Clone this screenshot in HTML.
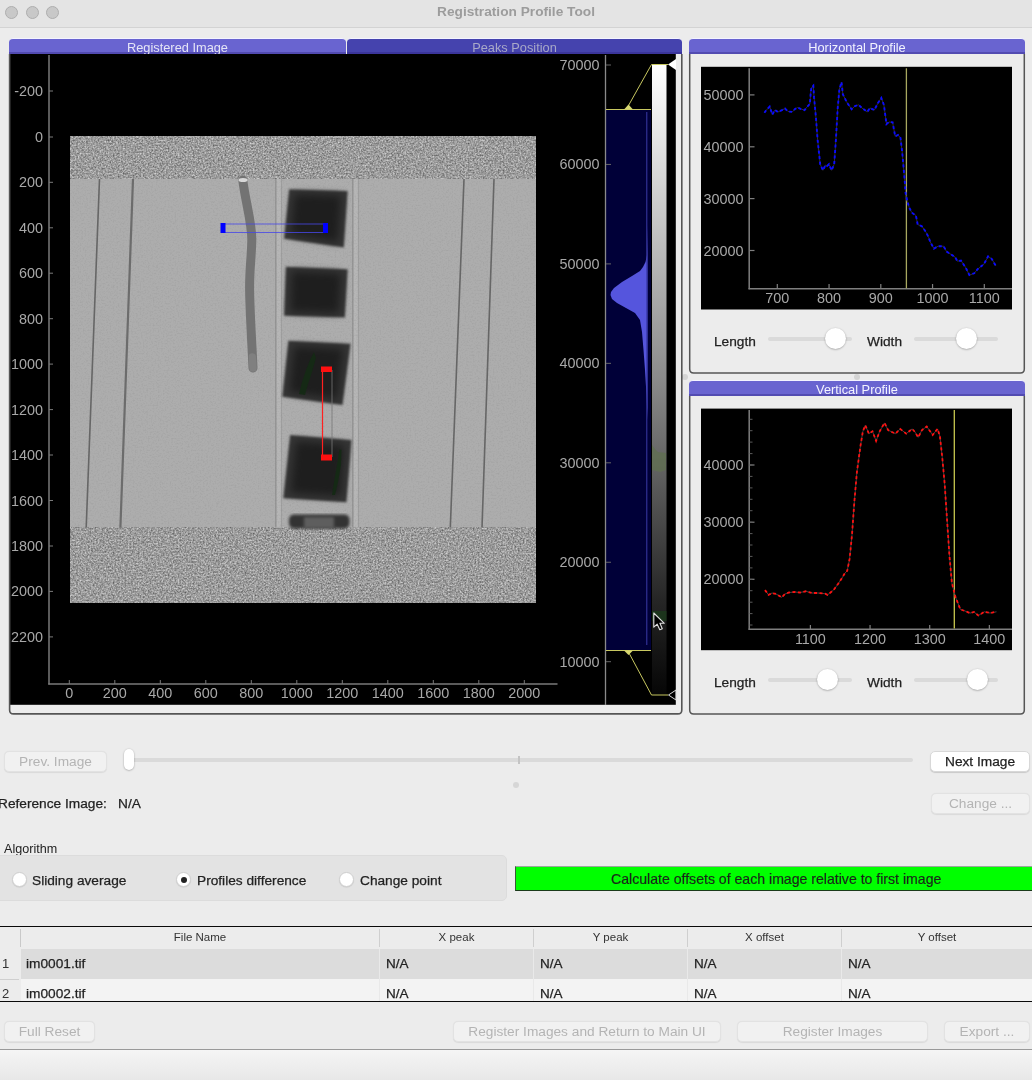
<!DOCTYPE html>
<html><head><meta charset="utf-8">
<style>
*{box-sizing:border-box}
html,body{margin:0;padding:0}
body{width:1032px;height:1080px;background:#ececec;position:relative;overflow:hidden;font-family:"Liberation Sans",sans-serif;color:#222;-webkit-font-smoothing:antialiased}
.a{will-change:transform}
.a{position:absolute}
.titlebar{left:0;top:0;width:1032px;height:28px;background:#e4e4e4;border-bottom:1px solid #d3d3d3}
.tl{width:13px;height:13px;border-radius:50%;background:#c8c8c8;border:1px solid #adadad;top:6px}
.title{left:0;width:1032px;top:4px;text-align:center;font-weight:bold;font-size:13.7px;color:#9c9c9c;line-height:16px}
.tab{height:16px;border-radius:4px 4px 0 0;font-size:12.8px;line-height:17px;text-align:center;border-top:1px solid #f4f4ff;overflow:hidden;box-shadow:inset 0 -2px 0 rgba(40,30,120,0.35)}
.btn{height:21px;border-radius:5px;background:#f1f1f1;border:1px solid #e2e2e2;font-size:13.7px;line-height:19px;text-align:center;color:#b4b4b4;box-shadow:0 0.5px 1px rgba(0,0,0,0.08)}
.btnw{background:#fff;color:#222;border:1px solid #d8d8d8;box-shadow:0 1px 1px rgba(0,0,0,0.15);-webkit-text-stroke:0.25px #222}
.lbl{font-size:13.7px;line-height:16px;color:#222;white-space:nowrap;-webkit-text-stroke:0.25px #222}
.radio{width:15px;height:15px;border-radius:50%;background:#fff;border:1px solid #cfcfcf;box-shadow:0 0.5px 1px rgba(0,0,0,0.12)}
.track{height:4px;border-radius:2px;background:#dadada}
.knob{width:21px;height:21px;border-radius:50%;background:#fff;box-shadow:0 0.5px 2px rgba(0,0,0,0.35)}
</style></head><body>

<!-- title bar -->
<div class="a titlebar"></div>
<div class="a tl" style="left:5px"></div>
<div class="a tl" style="left:25.5px"></div>
<div class="a tl" style="left:46px"></div>
<div class="a title">Registration Profile Tool</div>

<!-- LEFT PANEL -->
<div class="a tab" style="left:9px;top:38px;width:337px;background:#6964d0;color:#e4e4f6">Registered Image</div>
<div class="a tab" style="left:347px;top:38px;width:335px;background:#4543ae;color:#a8a8c8">Peaks Position</div>

<svg class="a" style="left:0;top:0" width="690" height="720" viewBox="0 0 690 720" id="leftsvg">
<defs>
<filter id="noise" x="0" y="0" width="100%" height="100%" filterUnits="objectBoundingBox" color-interpolation-filters="sRGB">
 <feTurbulence type="fractalNoise" baseFrequency="0.6" numOctaves="3" seed="5" result="t"/>
 <feColorMatrix in="t" type="matrix" values="0.6 0 0 0 0.31  0.6 0 0 0 0.31  0.6 0 0 0 0.31  0 0 0 0 1"/>
</filter>
<filter id="fine" x="-2%" y="-2%" width="104%" height="104%">
 <feTurbulence type="fractalNoise" baseFrequency="0.9" numOctaves="1" seed="7" result="t"/>
 <feColorMatrix in="t" type="matrix" values="0 0 0 0 0  0 0 0 0 0  0 0 0 0 0  0.25 0 0 0 -0.07" result="n"/>
 <feComposite in="n" in2="SourceGraphic" operator="in" result="nn"/>
 <feBlend in="SourceGraphic" in2="nn" mode="normal"/>
</filter>
<filter id="midnoise" x="0" y="0" width="100%" height="100%" color-interpolation-filters="sRGB">
 <feTurbulence type="fractalNoise" baseFrequency="0.6" numOctaves="2" seed="11" result="t"/>
 <feColorMatrix in="t" type="matrix" values="0 0 0 0 0.5  0 0 0 0 0.5  0 0 0 0 0.5  0.5 0 0 0 -0.22"/>
</filter>
<filter id="blur1" x="-10%" y="-10%" width="120%" height="120%" color-interpolation-filters="sRGB"><feGaussianBlur stdDeviation="1.6"/></filter>
<filter id="blur2" x="-20%" y="-20%" width="140%" height="140%" color-interpolation-filters="sRGB"><feGaussianBlur stdDeviation="1.3"/></filter>
<filter id="blur3" x="-20%" y="-20%" width="140%" height="140%" color-interpolation-filters="sRGB"><feGaussianBlur stdDeviation="4"/></filter>
<filter id="blur05" x="-100%" y="-10%" width="300%" height="120%" color-interpolation-filters="sRGB"><feGaussianBlur stdDeviation="0.6"/></filter>
<linearGradient id="lut" x1="0" y1="0" x2="0" y2="1">
 <stop offset="0" stop-color="#ffffff"/>
 <stop offset="0.06" stop-color="#f2f2f2"/>
 <stop offset="0.5" stop-color="#8a8a8a"/>
 <stop offset="0.85" stop-color="#262626"/>
 <stop offset="1" stop-color="#060606"/>
</linearGradient>
</defs>
<rect x="9.3" y="54" width="666.5" height="650.8" fill="#000"/>
<rect x="70" y="136.5" width="466" height="466.0" fill="#adadad"/>
<rect x="70" y="136.5" width="466" height="42.5" fill="#999" filter="url(#noise)"/>
<rect x="70" y="527.5" width="466" height="75.0" fill="#999" filter="url(#noise)"/>
<rect x="275" y="179" width="7" height="348.5" fill="#b6b6b6"/>
<line x1="275.8" y1="179" x2="275.8" y2="527.5" stroke="#939393" stroke-width="1.5"/>
<line x1="281.5" y1="179" x2="281.5" y2="527.5" stroke="#9e9e9e" stroke-width="1.2"/>
<rect x="352" y="179" width="7" height="348.5" fill="#b6b6b6"/>
<line x1="352.8" y1="179" x2="352.8" y2="527.5" stroke="#939393" stroke-width="1.5"/>
<line x1="358.5" y1="179" x2="358.5" y2="527.5" stroke="#9e9e9e" stroke-width="1.2"/>
<rect x="70" y="179" width="466" height="348.5" fill="#fff" filter="url(#midnoise)" opacity="1"/>
<line x1="99.5" y1="179" x2="86.2" y2="527.5" stroke="#666" stroke-width="1.6"/>
<line x1="133" y1="179" x2="120.4" y2="527.5" stroke="#6c6c6c" stroke-width="2.2"/>
<line x1="464" y1="179" x2="450.3" y2="527.5" stroke="#666" stroke-width="1.6"/>
<line x1="494" y1="179" x2="482" y2="527.5" stroke="#666" stroke-width="1.6"/>
<path d="M242.8 180 C245 200 252 222 251.8 240 C251.5 258 249.3 270 249.6 290 C250 315 252 345 253 368" stroke="#737373" stroke-width="9" fill="none" stroke-linecap="round" filter="url(#blur05)"/>
<path d="M252.4 357 L253 368" stroke="#808080" stroke-width="7.5" fill="none" stroke-linecap="round"/>
<ellipse cx="243" cy="180" rx="4.5" ry="2" fill="#d8d8d8" filter="url(#blur05)"/>
<polygon points="289.21475,189.202 347.61575,190.95299999999997 343.80475,247.60299999999998 284.06475,238.642" fill="#363636" filter="url(#blur2)"/>
<polygon points="294.7115,193.99 341.2055,195.435 338.1715,242.185 290.6115,234.79" fill="#1e1e1e" filter="url(#blur3)"/>
<polygon points="285.83299999999997,266.756 347.633,269.331 344.852,317.432 284.082,315.681" fill="#363636" filter="url(#blur2)"/>
<polygon points="291.902,271.22 341.102,273.345 338.888,313.03999999999996 290.508,311.595" fill="#1e1e1e" filter="url(#blur3)"/>
<polygon points="288.39824999999996,340.80375 350.50725,343.79075 342.47325,404.97275 282.32125,396.73275" fill="#363636" filter="url(#blur2)"/>
<polygon points="294.0105,346.18125 343.4565,348.64625 337.0605,399.13625 289.1725,392.33625" fill="#1e1e1e" filter="url(#blur3)"/>
<polygon points="290.1945,435.0145 351.47950000000003,440.06149999999997 346.4325,502.1705 283.2935,498.1535" fill="#363636" filter="url(#blur2)"/>
<polygon points="295.833,440.9275 344.623,445.0925 340.605,496.34749999999997 290.339,493.0325" fill="#1e1e1e" filter="url(#blur3)"/>
<rect x="289" y="514.5" width="60.5" height="14" rx="5" fill="#333" filter="url(#blur1)"/>
<rect x="304" y="517" width="30" height="11" fill="#5e5e5e" filter="url(#blur1)"/>
<path d="M314 352 L310 360 L306 370 L302 382 L299 394 L305 395 L308 384 L312 372 L316 358 Z" fill="#142a14" opacity="0.9"/>
<path d="M339.5 449 L337 465 L334 482 L332 495 L335 495 L338 482 L341 465 L341.5 450 Z" fill="#142a14" opacity="0.9"/>
<rect x="223" y="224" width="102" height="8.5" fill="none" stroke="#4848e8" stroke-width="0.8"/>
<rect x="220.5" y="223" width="5" height="10" fill="#0000ff"/>
<rect x="323" y="223" width="5" height="10" fill="#0000ff"/>
<line x1="322.5" y1="370" x2="322.5" y2="457" stroke="#ff2020" stroke-width="1.2"/>
<line x1="332" y1="370" x2="332" y2="457" stroke="#777" stroke-width="0.8"/>
<rect x="321" y="366.5" width="11" height="5.5" fill="#ff1010"/>
<rect x="321" y="454.5" width="11" height="6" fill="#ff1010"/>
<line x1="49" y1="55" x2="49" y2="684.5" stroke="#7a7a7a" stroke-width="1.5"/>
<line x1="48.25" y1="684" x2="557.5" y2="684" stroke="#7a7a7a" stroke-width="1.5"/>
<text x="43" y="96" text-anchor="end" font-size="14.4" fill="#a8a8a8">-200</text>
<line x1="49" y1="91" x2="53" y2="91" stroke="#7a7a7a" stroke-width="1"/>
<text x="43" y="142" text-anchor="end" font-size="14.4" fill="#a8a8a8">0</text>
<line x1="49" y1="137" x2="53" y2="137" stroke="#7a7a7a" stroke-width="1"/>
<text x="43" y="187.3" text-anchor="end" font-size="14.4" fill="#a8a8a8">200</text>
<line x1="49" y1="182.3" x2="53" y2="182.3" stroke="#7a7a7a" stroke-width="1"/>
<text x="43" y="232.8" text-anchor="end" font-size="14.4" fill="#a8a8a8">400</text>
<line x1="49" y1="227.8" x2="53" y2="227.8" stroke="#7a7a7a" stroke-width="1"/>
<text x="43" y="278.2" text-anchor="end" font-size="14.4" fill="#a8a8a8">600</text>
<line x1="49" y1="273.2" x2="53" y2="273.2" stroke="#7a7a7a" stroke-width="1"/>
<text x="43" y="323.7" text-anchor="end" font-size="14.4" fill="#a8a8a8">800</text>
<line x1="49" y1="318.7" x2="53" y2="318.7" stroke="#7a7a7a" stroke-width="1"/>
<text x="43" y="369.1" text-anchor="end" font-size="14.4" fill="#a8a8a8">1000</text>
<line x1="49" y1="364.1" x2="53" y2="364.1" stroke="#7a7a7a" stroke-width="1"/>
<text x="43" y="414.6" text-anchor="end" font-size="14.4" fill="#a8a8a8">1200</text>
<line x1="49" y1="409.6" x2="53" y2="409.6" stroke="#7a7a7a" stroke-width="1"/>
<text x="43" y="460" text-anchor="end" font-size="14.4" fill="#a8a8a8">1400</text>
<line x1="49" y1="455" x2="53" y2="455" stroke="#7a7a7a" stroke-width="1"/>
<text x="43" y="505.5" text-anchor="end" font-size="14.4" fill="#a8a8a8">1600</text>
<line x1="49" y1="500.5" x2="53" y2="500.5" stroke="#7a7a7a" stroke-width="1"/>
<text x="43" y="551" text-anchor="end" font-size="14.4" fill="#a8a8a8">1800</text>
<line x1="49" y1="546" x2="53" y2="546" stroke="#7a7a7a" stroke-width="1"/>
<text x="43" y="596.4" text-anchor="end" font-size="14.4" fill="#a8a8a8">2000</text>
<line x1="49" y1="591.4" x2="53" y2="591.4" stroke="#7a7a7a" stroke-width="1"/>
<text x="43" y="641.9" text-anchor="end" font-size="14.4" fill="#a8a8a8">2200</text>
<line x1="49" y1="636.9" x2="53" y2="636.9" stroke="#7a7a7a" stroke-width="1"/>
<text x="69.3" y="698" text-anchor="middle" font-size="14.4" fill="#a8a8a8">0</text>
<line x1="69.3" y1="680" x2="69.3" y2="684" stroke="#7a7a7a" stroke-width="1"/>
<text x="114.8" y="698" text-anchor="middle" font-size="14.4" fill="#a8a8a8">200</text>
<line x1="114.8" y1="680" x2="114.8" y2="684" stroke="#7a7a7a" stroke-width="1"/>
<text x="160.3" y="698" text-anchor="middle" font-size="14.4" fill="#a8a8a8">400</text>
<line x1="160.3" y1="680" x2="160.3" y2="684" stroke="#7a7a7a" stroke-width="1"/>
<text x="205.8" y="698" text-anchor="middle" font-size="14.4" fill="#a8a8a8">600</text>
<line x1="205.8" y1="680" x2="205.8" y2="684" stroke="#7a7a7a" stroke-width="1"/>
<text x="251.3" y="698" text-anchor="middle" font-size="14.4" fill="#a8a8a8">800</text>
<line x1="251.3" y1="680" x2="251.3" y2="684" stroke="#7a7a7a" stroke-width="1"/>
<text x="296.8" y="698" text-anchor="middle" font-size="14.4" fill="#a8a8a8">1000</text>
<line x1="296.8" y1="680" x2="296.8" y2="684" stroke="#7a7a7a" stroke-width="1"/>
<text x="342.3" y="698" text-anchor="middle" font-size="14.4" fill="#a8a8a8">1200</text>
<line x1="342.3" y1="680" x2="342.3" y2="684" stroke="#7a7a7a" stroke-width="1"/>
<text x="387.8" y="698" text-anchor="middle" font-size="14.4" fill="#a8a8a8">1400</text>
<line x1="387.8" y1="680" x2="387.8" y2="684" stroke="#7a7a7a" stroke-width="1"/>
<text x="433.3" y="698" text-anchor="middle" font-size="14.4" fill="#a8a8a8">1600</text>
<line x1="433.3" y1="680" x2="433.3" y2="684" stroke="#7a7a7a" stroke-width="1"/>
<text x="478.8" y="698" text-anchor="middle" font-size="14.4" fill="#a8a8a8">1800</text>
<line x1="478.8" y1="680" x2="478.8" y2="684" stroke="#7a7a7a" stroke-width="1"/>
<text x="524.3" y="698" text-anchor="middle" font-size="14.4" fill="#a8a8a8">2000</text>
<line x1="524.3" y1="680" x2="524.3" y2="684" stroke="#7a7a7a" stroke-width="1"/>
<rect x="606" y="110" width="45" height="540" fill="#000038"/>
<polygon points="647.5,225 647,255 645.5,262 643,267 640,271 632,276 622,282 614,288 611,292 610.5,295 612,299 617,303 626,308 635,313 640,320 642,332 643.5,350 645,370 646.5,395 647.5,420" fill="#5555dd"/>
<line x1="646.8" y1="112" x2="646.8" y2="645" stroke="#3a3aa8" stroke-width="1"/>
<line x1="605.5" y1="55" x2="605.5" y2="705" stroke="#8a8a8a" stroke-width="1.3"/>
<text x="599.5" y="70.0" text-anchor="end" font-size="14.4" fill="#a8a8a8">70000</text>
<line x1="606" y1="65.0" x2="611" y2="65.0" stroke="#666" stroke-width="1"/>
<text x="599.5" y="169.45" text-anchor="end" font-size="14.4" fill="#a8a8a8">60000</text>
<line x1="606" y1="164.45" x2="611" y2="164.45" stroke="#666" stroke-width="1"/>
<text x="599.5" y="268.9" text-anchor="end" font-size="14.4" fill="#a8a8a8">50000</text>
<line x1="606" y1="263.9" x2="611" y2="263.9" stroke="#666" stroke-width="1"/>
<text x="599.5" y="368.35" text-anchor="end" font-size="14.4" fill="#a8a8a8">40000</text>
<line x1="606" y1="363.35" x2="611" y2="363.35" stroke="#666" stroke-width="1"/>
<text x="599.5" y="467.8" text-anchor="end" font-size="14.4" fill="#a8a8a8">30000</text>
<line x1="606" y1="462.8" x2="611" y2="462.8" stroke="#666" stroke-width="1"/>
<text x="599.5" y="567.25" text-anchor="end" font-size="14.4" fill="#a8a8a8">20000</text>
<line x1="606" y1="562.25" x2="611" y2="562.25" stroke="#666" stroke-width="1"/>
<text x="599.5" y="666.7" text-anchor="end" font-size="14.4" fill="#a8a8a8">10000</text>
<line x1="606" y1="661.7" x2="611" y2="661.7" stroke="#666" stroke-width="1"/>
<rect x="652" y="65" width="14.5" height="629.5" fill="url(#lut)"/>
<path d="M652 445 L655 449 L658 452 L666 453 L666 470 L660 472 L652 470 Z" fill="#607050" opacity="0.75"/>
<rect x="652" y="611" width="14.5" height="10" fill="#1c3a1c" opacity="0.8"/>
<line x1="606" y1="109.5" x2="651" y2="109.5" stroke="#c8c860" stroke-width="1"/>
<line x1="606" y1="650.5" x2="651" y2="650.5" stroke="#c8c860" stroke-width="1"/>
<polyline points="628.5,105.5 651.5,64.5 668,64.5" stroke="#c8c860" stroke-width="1" fill="none"/>
<polyline points="629,653 651.5,695 668,695" stroke="#c8c860" stroke-width="1" fill="none"/>
<polygon points="624,109.5 633,109.5 628.5,104.5" fill="#d8d870"/>
<polygon points="624,650.5 633,650.5 628.5,655" fill="#d8d870"/>
<polygon points="668,64.5 676,59 676,70" fill="#fff"/>
<polygon points="668.5,695 676,690 676,700" fill="none" stroke="#ddd" stroke-width="1"/>
<path d="M653.8 613 L653.8 627.2 L657.2 624.2 L659.8 629.8 L662.3 628.7 L659.9 623.3 L664.3 623.3 Z" fill="#000" stroke="#e0e0e0" stroke-width="1.1" stroke-linejoin="round"/>
</svg>

<!-- RIGHT PANELS -->
<div class="a tab" style="left:689px;top:38px;width:336px;background:#6964d0;color:#f2f2ff">Horizontal Profile</div>

<div class="a tab" style="left:689px;top:380px;width:336px;background:#6964d0;color:#f2f2ff">Vertical Profile</div>

<svg class="a" style="left:0;top:0" width="1032" height="720" viewBox="0 0 1032 720" id="rightsvg">
<rect x="701" y="66.8" width="311" height="242.7" fill="#000"/>
<line x1="749.2" y1="68.3" x2="749.2" y2="289.3" stroke="#7f7f7f" stroke-width="1.5"/>
<line x1="748.5" y1="288.8" x2="1012" y2="288.8" stroke="#7f7f7f" stroke-width="1.5"/>
<text x="743.5" y="99.9" text-anchor="end" font-size="14.4" fill="#a8a8a8">50000</text>
<line x1="749.5" y1="94.9" x2="754.5" y2="94.9" stroke="#7f7f7f" stroke-width="1.2"/>
<text x="743.5" y="151.8" text-anchor="end" font-size="14.4" fill="#a8a8a8">40000</text>
<line x1="749.5" y1="146.8" x2="754.5" y2="146.8" stroke="#7f7f7f" stroke-width="1.2"/>
<text x="743.5" y="203.6" text-anchor="end" font-size="14.4" fill="#a8a8a8">30000</text>
<line x1="749.5" y1="198.6" x2="754.5" y2="198.6" stroke="#7f7f7f" stroke-width="1.2"/>
<text x="743.5" y="255.5" text-anchor="end" font-size="14.4" fill="#a8a8a8">20000</text>
<line x1="749.5" y1="250.5" x2="754.5" y2="250.5" stroke="#7f7f7f" stroke-width="1.2"/>
<text x="777.3" y="303.3" text-anchor="middle" font-size="14.4" fill="#a8a8a8">700</text>
<line x1="777.3" y1="284" x2="777.3" y2="288.5" stroke="#7f7f7f" stroke-width="1.2"/>
<text x="829.05" y="303.3" text-anchor="middle" font-size="14.4" fill="#a8a8a8">800</text>
<line x1="829.05" y1="284" x2="829.05" y2="288.5" stroke="#7f7f7f" stroke-width="1.2"/>
<text x="880.8" y="303.3" text-anchor="middle" font-size="14.4" fill="#a8a8a8">900</text>
<line x1="880.8" y1="284" x2="880.8" y2="288.5" stroke="#7f7f7f" stroke-width="1.2"/>
<text x="932.55" y="303.3" text-anchor="middle" font-size="14.4" fill="#a8a8a8">1000</text>
<line x1="932.55" y1="284" x2="932.55" y2="288.5" stroke="#7f7f7f" stroke-width="1.2"/>
<text x="984.3" y="303.3" text-anchor="middle" font-size="14.4" fill="#a8a8a8">1100</text>
<line x1="984.3" y1="284" x2="984.3" y2="288.5" stroke="#7f7f7f" stroke-width="1.2"/>
<line x1="906.4" y1="68.3" x2="906.4" y2="288.3" stroke="#a8a860" stroke-width="1.3"/>
<polyline points="764.4,112.7 766,110.5 769.7,106.6 772.3,114.5 775,110 778,112 781.9,110.1 785,108.5 788,111.5 792.3,111.9 795,109 797.6,107.5 801,109 804.5,110.1 807,107 809.8,104 810.8,92 811.5,87.4 813.3,85.7 814.1,97.9 815.9,117.1 817.6,139.8 820.2,164.2 822.9,170.3 825.5,165.1 827,166 829,164.2 831.6,170.3 834.2,164.2 835.9,139.8 837.7,108.4 839.4,89.2 841.5,82.2 842.9,94.4 846.4,101.4 848,104 851.6,109.2 855,106 858.6,104.9 862,108 867.3,111.9 870,108 874.3,110.1 878,103 881.3,97.9 883.9,104.9 886.5,124.1 889,122 892.6,122.3 895.2,136.3 898,135 900.5,138 902.2,152 904.8,181.6 905.6,193.2 907.4,201.7 909.3,207.7 911.7,212.5 915.9,215.5 917.7,224.5 921.9,226.3 926.1,232.3 928.5,237.2 930.3,242 933.9,248.6 938.1,246.2 943.6,246.2 946.6,251.6 955,257 957.4,261.2 961,260.6 965.8,267.8 969.4,275.1 974.2,273.3 977.8,269 983.9,264.2 988.1,256.4 991.7,258.8 995.9,266" fill="none" stroke="#333" stroke-width="1"/>
<polyline points="764.4,112.7 766,110.5 769.7,106.6 772.3,114.5 775,110 778,112 781.9,110.1 785,108.5 788,111.5 792.3,111.9 795,109 797.6,107.5 801,109 804.5,110.1 807,107 809.8,104 810.8,92 811.5,87.4 813.3,85.7 814.1,97.9 815.9,117.1 817.6,139.8 820.2,164.2 822.9,170.3 825.5,165.1 827,166 829,164.2 831.6,170.3 834.2,164.2 835.9,139.8 837.7,108.4 839.4,89.2 841.5,82.2 842.9,94.4 846.4,101.4 848,104 851.6,109.2 855,106 858.6,104.9 862,108 867.3,111.9 870,108 874.3,110.1 878,103 881.3,97.9 883.9,104.9 886.5,124.1 889,122 892.6,122.3 895.2,136.3 898,135 900.5,138 902.2,152 904.8,181.6 905.6,193.2 907.4,201.7 909.3,207.7 911.7,212.5 915.9,215.5 917.7,224.5 921.9,226.3 926.1,232.3 928.5,237.2 930.3,242 933.9,248.6 938.1,246.2 943.6,246.2 946.6,251.6 955,257 957.4,261.2 961,260.6 965.8,267.8 969.4,275.1 974.2,273.3 977.8,269 983.9,264.2 988.1,256.4 991.7,258.8 995.9,266" fill="none" stroke="#0a0aff" stroke-width="1.9" stroke-dasharray="3 2.5"/>
<rect x="701" y="408.6" width="311" height="241.6" fill="#000"/>
<line x1="749.2" y1="410" x2="749.2" y2="629.8" stroke="#7f7f7f" stroke-width="1.5"/>
<line x1="748.5" y1="629.3" x2="1012" y2="629.3" stroke="#7f7f7f" stroke-width="1.5"/>
<text x="743.5" y="470" text-anchor="end" font-size="14.4" fill="#a8a8a8">40000</text>
<line x1="749.5" y1="465" x2="754.5" y2="465" stroke="#7f7f7f" stroke-width="1.2"/>
<text x="743.5" y="527.2" text-anchor="end" font-size="14.4" fill="#a8a8a8">30000</text>
<line x1="749.5" y1="522.2" x2="754.5" y2="522.2" stroke="#7f7f7f" stroke-width="1.2"/>
<text x="743.5" y="584.3" text-anchor="end" font-size="14.4" fill="#a8a8a8">20000</text>
<line x1="749.5" y1="579.3" x2="754.5" y2="579.3" stroke="#7f7f7f" stroke-width="1.2"/>
<line x1="749.5" y1="625.0" x2="752.5" y2="625.0" stroke="#5a5a5a" stroke-width="1"/>
<line x1="749.5" y1="613.6" x2="752.5" y2="613.6" stroke="#5a5a5a" stroke-width="1"/>
<line x1="749.5" y1="602.2" x2="752.5" y2="602.2" stroke="#5a5a5a" stroke-width="1"/>
<line x1="749.5" y1="590.7" x2="752.5" y2="590.7" stroke="#5a5a5a" stroke-width="1"/>
<line x1="749.5" y1="579.3" x2="752.5" y2="579.3" stroke="#5a5a5a" stroke-width="1"/>
<line x1="749.5" y1="567.9" x2="752.5" y2="567.9" stroke="#5a5a5a" stroke-width="1"/>
<line x1="749.5" y1="556.4" x2="752.5" y2="556.4" stroke="#5a5a5a" stroke-width="1"/>
<line x1="749.5" y1="545.0" x2="752.5" y2="545.0" stroke="#5a5a5a" stroke-width="1"/>
<line x1="749.5" y1="533.6" x2="752.5" y2="533.6" stroke="#5a5a5a" stroke-width="1"/>
<line x1="749.5" y1="522.2" x2="752.5" y2="522.2" stroke="#5a5a5a" stroke-width="1"/>
<line x1="749.5" y1="510.7" x2="752.5" y2="510.7" stroke="#5a5a5a" stroke-width="1"/>
<line x1="749.5" y1="499.3" x2="752.5" y2="499.3" stroke="#5a5a5a" stroke-width="1"/>
<line x1="749.5" y1="487.9" x2="752.5" y2="487.9" stroke="#5a5a5a" stroke-width="1"/>
<line x1="749.5" y1="476.4" x2="752.5" y2="476.4" stroke="#5a5a5a" stroke-width="1"/>
<line x1="749.5" y1="465.0" x2="752.5" y2="465.0" stroke="#5a5a5a" stroke-width="1"/>
<line x1="749.5" y1="453.6" x2="752.5" y2="453.6" stroke="#5a5a5a" stroke-width="1"/>
<line x1="749.5" y1="442.1" x2="752.5" y2="442.1" stroke="#5a5a5a" stroke-width="1"/>
<line x1="749.5" y1="430.7" x2="752.5" y2="430.7" stroke="#5a5a5a" stroke-width="1"/>
<line x1="749.5" y1="419.3" x2="752.5" y2="419.3" stroke="#5a5a5a" stroke-width="1"/>
<text x="810.4" y="643.8" text-anchor="middle" font-size="14.4" fill="#a8a8a8">1100</text>
<line x1="810.4" y1="625" x2="810.4" y2="629" stroke="#7f7f7f" stroke-width="1.2"/>
<text x="870.05" y="643.8" text-anchor="middle" font-size="14.4" fill="#a8a8a8">1200</text>
<line x1="870.05" y1="625" x2="870.05" y2="629" stroke="#7f7f7f" stroke-width="1.2"/>
<text x="929.6999999999999" y="643.8" text-anchor="middle" font-size="14.4" fill="#a8a8a8">1300</text>
<line x1="929.6999999999999" y1="625" x2="929.6999999999999" y2="629" stroke="#7f7f7f" stroke-width="1.2"/>
<text x="989.3499999999999" y="643.8" text-anchor="middle" font-size="14.4" fill="#a8a8a8">1400</text>
<line x1="989.3499999999999" y1="625" x2="989.3499999999999" y2="629" stroke="#7f7f7f" stroke-width="1.2"/>
<line x1="954.3" y1="410" x2="954.3" y2="628.5" stroke="#c8c850" stroke-width="1.3"/>
<polyline points="765,590.1 768.6,594.9 772,593 776,594 781.8,597.3 785,594 789,592.5 795,592 800,592.5 805.9,591.3 812,593 818,593 825.1,593.7 827.5,594.9 833.5,590.1 838,584 842,578 845,573 847.2,570.9 849.6,558.9 852,534.8 854.4,501.1 856.9,472.2 860.5,445.7 862.9,431.3 865.3,425.3 868.9,433.7 872.5,431.3 876.1,440.9 879.7,431.3 884.5,422.9 888.1,430.1 895.4,433.7 900.2,428.9 906.2,433.7 912.2,428.9 915,432 918.2,437.3 922,430 926.7,426.5 932.7,434.9 937.5,428.9 939.9,436.1 942.3,457.8 944.7,484.3 947.1,520.4 949.5,556.5 951.9,583 955.6,597.4 960.4,609.4 965,611 970,613.1 974,612 978.4,615.5 984.4,611.8 990,613 996.5,611.8" fill="none" stroke="#444" stroke-width="1"/>
<polyline points="765,590.1 768.6,594.9 772,593 776,594 781.8,597.3 785,594 789,592.5 795,592 800,592.5 805.9,591.3 812,593 818,593 825.1,593.7 827.5,594.9 833.5,590.1 838,584 842,578 845,573 847.2,570.9 849.6,558.9 852,534.8 854.4,501.1 856.9,472.2 860.5,445.7 862.9,431.3 865.3,425.3 868.9,433.7 872.5,431.3 876.1,440.9 879.7,431.3 884.5,422.9 888.1,430.1 895.4,433.7 900.2,428.9 906.2,433.7 912.2,428.9 915,432 918.2,437.3 922,430 926.7,426.5 932.7,434.9 937.5,428.9 939.9,436.1 942.3,457.8 944.7,484.3 947.1,520.4 949.5,556.5 951.9,583 955.6,597.4 960.4,609.4 965,611 970,613.1 974,612 978.4,615.5 984.4,611.8 990,613 996.5,611.8" fill="none" stroke="#ff1010" stroke-width="1.8" stroke-dasharray="3 2.5"/>
</svg>

<div class="a" style="left:682px;top:373.5px;width:6px;height:6px;border-radius:50%;background:#d4d4d4"></div>
<div class="a" style="left:853.5px;top:373.5px;width:6px;height:6px;border-radius:50%;background:#d4d4d4"></div>
<svg class="a" style="left:0;top:0" width="1032" height="720" viewBox="0 0 1032 720" id="panels">
<path d="M9.6,54 V709.9 Q9.6,713.9 13.6,713.9 H677.8 Q681.8,713.9 681.8,709.9 V54" fill="none" stroke="#555" stroke-width="1.6"/>
<path d="M689.7,54 V369.1 Q689.7,373.1 693.7,373.1 H1020.3 Q1024.3,373.1 1024.3,369.1 V54" fill="none" stroke="#555" stroke-width="1.5"/>
<path d="M689.7,396 V709.9 Q689.7,713.9 693.7,713.9 H1020.3 Q1024.3,713.9 1024.3,709.9 V396" fill="none" stroke="#555" stroke-width="1.5"/>
</svg>
<!-- sliders in right panels -->
<div class="a lbl" style="left:714px;top:333.7px">Length</div>
<div class="a track" style="left:768px;top:337px;width:84px"></div>
<div class="a knob" style="left:825px;top:328px"></div>
<div class="a lbl" style="left:867px;top:333.7px">Width</div>
<div class="a track" style="left:914px;top:337px;width:84px"></div>
<div class="a knob" style="left:956px;top:328px"></div>

<div class="a lbl" style="left:714px;top:674.7px">Length</div>
<div class="a track" style="left:768px;top:678px;width:84px"></div>
<div class="a knob" style="left:817px;top:669px"></div>
<div class="a lbl" style="left:867px;top:674.7px">Width</div>
<div class="a track" style="left:914px;top:678px;width:84px"></div>
<div class="a knob" style="left:967px;top:669px"></div>

<!-- image navigation -->
<div class="a btn" style="left:4px;top:751px;width:103px">Prev. Image</div>
<div class="a track" style="left:128px;top:757.5px;width:785px"></div>
<div class="a" style="left:517.5px;top:756px;width:1.5px;height:8px;background:#c4c4c4"></div>
<div class="a" style="left:124px;top:749px;width:10px;height:21px;border-radius:5px;background:#fff;box-shadow:0 0.5px 2px rgba(0,0,0,0.35)"></div>
<div class="a" style="left:513px;top:782px;width:6px;height:6px;border-radius:50%;background:#d6d6d6"></div>
<div class="a btn btnw" style="left:930px;top:751px;width:100px">Next Image</div>

<div class="a lbl" style="left:-2.5px;top:795.5px">Reference Image:</div>
<div class="a lbl" style="left:118px;top:795.5px">N/A</div>
<div class="a btn" style="left:931px;top:793px;width:99px">Change ...</div>

<!-- algorithm -->
<div class="a" style="left:4px;top:842px;font-size:12.6px;line-height:14px;color:#222">Algorithm</div>
<div class="a" style="left:-6px;top:855px;width:513px;height:46px;background:#e3e3e3;border:1px solid #dcdcdc;border-radius:5px"></div>
<div class="a radio" style="left:12px;top:872px"></div>
<div class="a lbl" style="left:32px;top:873px">Sliding average</div>
<div class="a radio" style="left:176px;top:872px"></div>
<div class="a" style="left:181px;top:877px;width:6px;height:6px;border-radius:50%;background:#222"></div>
<div class="a lbl" style="left:196.5px;top:873px">Profiles difference</div>
<div class="a radio" style="left:339px;top:872px"></div>
<div class="a lbl" style="left:359.5px;top:873px">Change point</div>
<div class="a" style="left:515px;top:866px;width:520px;height:25px;background:#00ff00;border-top:1px solid #9aa89a;border-bottom:1.5px solid #1a3a1a;border-left:1px solid #3a5a3a;font-size:14.1px;line-height:24px;color:#1a261a;padding-left:95px;white-space:nowrap;-webkit-text-stroke:0.2px #1a261a">Calculate offsets of each image relative to first image</div>

<!-- table -->
<div class="a" id="table" style="left:0;top:925.5px;width:1032px;height:76px;border-top:1.5px solid #0a0a0a;border-bottom:1.5px solid #0a0a0a;background:#ececec;overflow:hidden">
<div class="a" style="left:0;top:0;width:1032px;height:21px;background:#ececec"></div>
<div class="a" style="left:20px;top:2px;width:1px;height:18px;background:#c9c9c9"></div>
<div class="a" style="left:21px;top:3px;width:358px;text-align:center;font-size:11.5px;line-height:14px;color:#333">File Name</div>
<div class="a" style="left:379px;top:2px;width:1px;height:18px;background:#cfcfcf"></div>
<div class="a" style="left:380px;top:3px;width:153px;text-align:center;font-size:11.5px;line-height:14px;color:#333">X peak</div>
<div class="a" style="left:533px;top:2px;width:1px;height:18px;background:#cfcfcf"></div>
<div class="a" style="left:534px;top:3px;width:153px;text-align:center;font-size:11.5px;line-height:14px;color:#333">Y peak</div>
<div class="a" style="left:687px;top:2px;width:1px;height:18px;background:#cfcfcf"></div>
<div class="a" style="left:688px;top:3px;width:153px;text-align:center;font-size:11.5px;line-height:14px;color:#333">X offset</div>
<div class="a" style="left:841px;top:2px;width:1px;height:18px;background:#cfcfcf"></div>
<div class="a" style="left:842px;top:3px;width:190px;text-align:center;font-size:11.5px;line-height:14px;color:#333">Y offset</div>
<div class="a" style="left:21px;top:22px;width:1011px;height:29.5px;background:#dcdcdc"></div>
<div class="a" style="left:21px;top:52px;width:1011px;height:25px;background:#f3f3f3"></div>
<div class="a" style="left:0;top:51.5px;width:19px;height:1px;background:#cfcfcf"></div>
<div class="a" style="left:379px;top:21.5px;width:1px;height:55px;background:#e9e9e9"></div>
<div class="a" style="left:533px;top:21.5px;width:1px;height:55px;background:#e9e9e9"></div>
<div class="a" style="left:687px;top:21.5px;width:1px;height:55px;background:#e9e9e9"></div>
<div class="a" style="left:841px;top:21.5px;width:1px;height:55px;background:#e9e9e9"></div>
<div class="a" style="left:2px;top:29px;font-size:13px;line-height:16px;color:#333">1</div>
<div class="a" style="left:2px;top:59px;font-size:13px;line-height:16px;color:#333">2</div>
<div class="a lbl" style="left:26px;top:29px;font-size:13.7px">im0001.tif</div>
<div class="a lbl" style="left:386px;top:29px;font-size:13.5px">N/A</div>
<div class="a lbl" style="left:540px;top:29px;font-size:13.5px">N/A</div>
<div class="a lbl" style="left:694px;top:29px;font-size:13.5px">N/A</div>
<div class="a lbl" style="left:848px;top:29px;font-size:13.5px">N/A</div>
<div class="a lbl" style="left:26px;top:59px;font-size:13.7px">im0002.tif</div>
<div class="a lbl" style="left:386px;top:59px;font-size:13.5px">N/A</div>
<div class="a lbl" style="left:540px;top:59px;font-size:13.5px">N/A</div>
<div class="a lbl" style="left:694px;top:59px;font-size:13.5px">N/A</div>
<div class="a lbl" style="left:848px;top:59px;font-size:13.5px">N/A</div>
</div>

<!-- bottom buttons -->
<div class="a btn" style="left:4px;top:1021px;width:91px">Full Reset</div>
<div class="a btn" style="left:453px;top:1021px;width:268px">Register Images and Return to Main UI</div>
<div class="a btn" style="left:737px;top:1021px;width:191px">Register Images</div>
<div class="a btn" style="left:944px;top:1021px;width:86px">Export ...</div>
<div class="a" style="left:0;top:1048.5px;width:1032px;height:32px;border-top:1.5px solid #999;background:linear-gradient(#f5f5f5,#e7e7e7)"></div>

</body></html>
